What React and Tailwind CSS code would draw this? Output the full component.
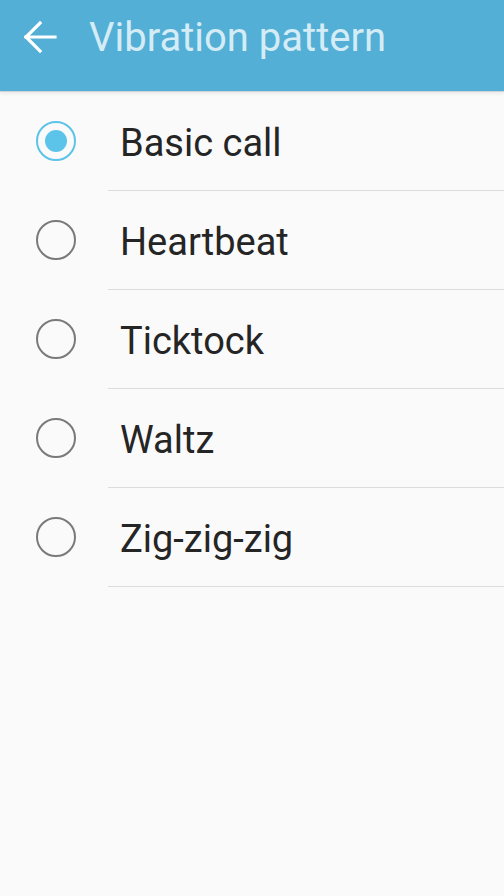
import { useState } from 'react';

const patterns = ['Basic call', 'Heartbeat', 'Ticktock', 'Waltz', 'Zig-zig-zig'];

function Radio({ checked }) {
  return (
    <div
      className={`w-10 h-10 rounded-full border-2 flex items-center justify-center ${
        checked ? 'border-[#5bc4e8]' : 'border-[#7a7a7a]'
      }`}
    >
      {checked && <div className="w-[22px] h-[22px] rounded-full bg-[#5bc4e8]" />}
    </div>
  );
}

export default function App() {
  const [selected, setSelected] = useState('Basic call');

  return (
    <div className="w-[504px] h-[896px] bg-[#fafafa] font-['Roboto',sans-serif] overflow-hidden">
      {/* Header */}
      <div className="h-[92px] bg-[#53afd5] flex items-start pt-[14px] border-b border-[#cfd3d5] shadow-[0_2px_3px_rgba(0,0,0,0.06)]">
        <button className="w-[80px] h-[46px] flex items-center justify-center">
          <svg width="34" height="32" viewBox="0 0 34 32" fill="none" stroke="white" strokeWidth="3.2" strokeLinecap="square">
            <path d="M3 16h29" />
            <path d="M17 2L3 16l14 14" />
          </svg>
        </button>
        <h1 className="ml-[9px] text-[40px] leading-[48px] text-[#d4ecf6]">Vibration pattern</h1>
      </div>

      {/* List */}
      <div>
        {patterns.map((name) => (
          <div
            key={name}
            className="h-[99px] flex cursor-pointer"
            onClick={() => setSelected(name)}
          >
            <div className="w-[108px] flex items-center pl-[36px] pb-[2px]">
              <Radio checked={selected === name} />
            </div>
            <div className="flex-1 flex items-center border-b border-[#dcdcdc] pl-[12px] pt-[5px]">
              <span className="text-[38px] text-[#252525]">{name}</span>
            </div>
          </div>
        ))}
      </div>
    </div>
  );
}
